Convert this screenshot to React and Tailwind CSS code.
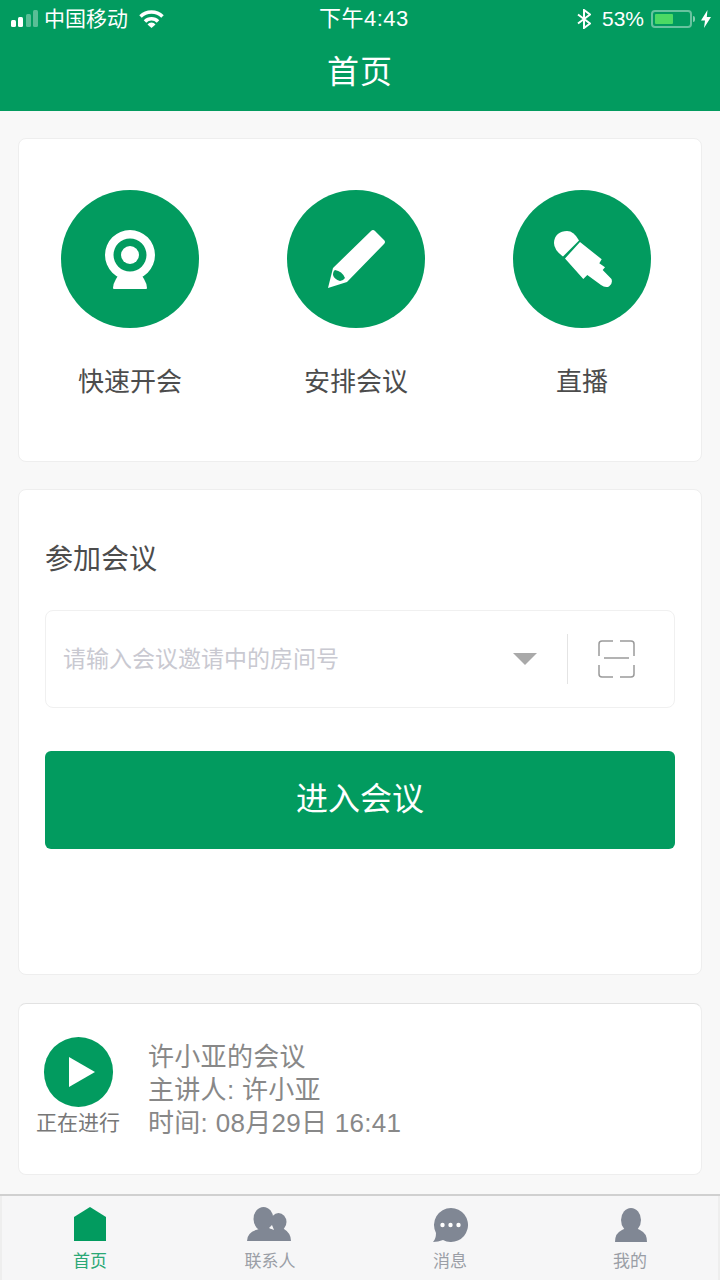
const font = { fontFamily: '"Liberation Sans", "Noto Sans CJK SC", sans-serif' };

function StatusBar() {
  return (
    <div className="relative flex h-[37px] items-center pl-[11px] pr-[9px] text-[21px] leading-none text-white">
      <svg width="28" height="18" viewBox="0 0 28 18" fill="#fff">
        <rect x="0" y="10" width="5" height="7" rx="1.5" />
        <rect x="7" y="7" width="5" height="10" rx="1.5" />
        <rect x="15" y="4" width="5" height="13" rx="1.5" opacity="0.35" />
        <rect x="22" y="0" width="5" height="17" rx="1.5" opacity="0.35" />
      </svg>
      <span className="ml-[5px]">中国移动</span>
      <svg className="ml-[11px]" width="25" height="18" viewBox="0 0 25 18" fill="none" stroke="#fff" strokeWidth="3.500">
        <path d="M1.500 6.500a15.500 15.500 0 0 1 22 0" />
        <path d="M6 11.500a9 9 0 0 1 13 0" />
        <path d="M8.500 14.500l4 3.500 4-3.500a5 5 0 0 0-8 0z" fill="#fff" stroke="none" />
      </svg>
      <span className="absolute left-[319px] top-[8px] text-[22px] tracking-[0.5px]">下午4:43</span>
      <div className="ml-auto flex items-center">
        <svg width="14" height="20" viewBox="0 0 14 20" fill="none" stroke="#fff" strokeWidth="2">
          <path d="M1 5.500l12 9-6 4.500V1l6 4.500-12 9" />
        </svg>
        <span className="ml-[11px] text-[21px]">53%</span>
        <div className="ml-[7px] flex h-[18px] w-[41px] items-center rounded-[4px] border-2 border-white/40 p-[2px]">
          <div className="h-full w-[18px] rounded-[1px] bg-[#4cd964]" />
        </div>
        <div className="ml-[1px] h-[6px] w-[2px] rounded-r-sm bg-white/50" />
        <svg className="ml-[6px]" width="10" height="18" viewBox="0 0 10 18" fill="#fff">
          <path d="M6.500 0L0 10.500h4L3 18l7-11H5.800z" />
        </svg>
      </div>
    </div>
  );
}

function Action({ label, children }) {
  return (
    <div className="flex flex-col items-center">
      <div className="flex h-[138px] w-[138px] items-center justify-center rounded-full bg-[#029b5f]">{children}</div>
      <span className="mt-[38px] text-[26px] leading-[33px] text-[#4c4c4c]">{label}</span>
    </div>
  );
}

function TabItem({ label, active, children }) {
  return (
    <div className="flex flex-col items-center">
      <div className="flex h-[36px] items-end">{children}</div>
      <span className={`mt-[10px] text-[17px] leading-[22px] ${active ? 'text-[#2aa876]' : 'text-[#9a9ea6]'}`}>{label}</span>
    </div>
  );
}

export default function App() {
  return (
    <div className="flex h-[1280px] w-[720px] flex-col overflow-hidden bg-[#f8f8f8]" style={font}>
      <header className="h-[111px] bg-[#029b5f]">
        <StatusBar />
        <h1 className="mt-[15px] text-center text-[32px] font-normal leading-[40px] tracking-[1px] text-white">首页</h1>
      </header>

      <main className="flex flex-col px-[18px] pt-[27px]">
        <section className="flex h-[324px] gap-[88px] rounded-[8px] border border-[#eeeeee] bg-white pl-[42px] pt-[51px]">
          <Action label="快速开会">
            <svg className="translate-y-[1px]" width="52" height="60" viewBox="0 0 52 60" fill="#fff">
              <path fillRule="evenodd" d="M26 0a25 25 0 1 1 0 50 25 25 0 0 1 0-50zm0 8.500a16.500 16.500 0 1 0 0 33 16.500 16.500 0 0 0 0-33z" />
              <circle cx="26" cy="25" r="9" />
              <path d="M15 44h22l3 5q3 5 3 9 0 1-1 1H10q-1 0-1-1 0-4 3-9z" />
            </svg>
          </Action>
          <Action label="安排会议">
            <svg width="60" height="60" viewBox="0 0 60 60" fill="#fff">
              <path d="M2 59L7 39 45 2q2-2 4 0l9 9q2 2 0 4L21 53z" />
              <path d="M9 41Q16 42 19 49 17 52 14 52 8 50 7 46 7 42 9 41z" fill="#029b5f" />
            </svg>
          </Action>
          <Action label="直播">
            <svg width="66" height="66" viewBox="0 0 66 66" fill="#fff">
              <path d="M14 30.500Q5 24 5 17C5 9 11 5 18 5Q25 5 30 14.500z" />
              <path d="M16 32.500L31 16l21.700 17.300-2.400 4 5.700 4-2.300 2.700 8.800 9Q64 58 60 60.500 56 62 52 59L38.300 49l-4 4z" />
            </svg>
          </Action>
        </section>

        <section className="mt-[27px] h-[486px] rounded-[8px] border border-[#eeeeee] bg-white px-[26px] pt-[52px]">
          <h2 className="text-[28px] font-normal leading-[36px] text-[#4c4c4c]">参加会议</h2>
          <div className="mt-[32px] flex h-[98px] items-center rounded-[8px] border border-[#f0f0f0] pl-[17px]">
            <span className="flex-1 text-[23px] text-[#c9c9d1]">请输入会议邀请中的房间号</span>
            <svg className="-translate-x-[1px]" width="24" height="12" viewBox="0 0 24 12" fill="#a9a9a9">
              <path d="M0 0h24L12 12z" />
            </svg>
            <div className="ml-[29px] h-[50px] w-[1px] bg-[#e4e4e4]" />
            <svg className="ml-[30px] mr-[39px]" width="37" height="38" viewBox="0 0 37 38" fill="none" stroke="#9a9a9a" strokeWidth="1.500">
              <path d="M1 16V4q0-3 3-3h11M22 1h11q3 0 3 3v12M6 18h25M1 25v9q0 3 3 3h11M22 37h11q3 0 3-3v-9" />
            </svg>
          </div>
          <button className="mt-[43px] h-[98px] w-full rounded-[6px] bg-[#029b5f] pb-[2px] text-[32px] text-white">进入会议</button>
        </section>

        <section className="mt-[28px] flex h-[172px] rounded-[8px] border border-[#eeeeee] border-t-[#e2e2e2] bg-white pl-[17px] pt-[33px]">
          <div className="flex flex-col items-center">
            <div className="flex h-[70px] w-[69px] items-center justify-center rounded-full bg-[#029b5f]">
              <svg className="ml-[8px]" width="26" height="30" viewBox="0 0 26 30" fill="#fff">
                <path d="M0 0l26 15L0 30z" />
              </svg>
            </div>
            <span className="mt-[2px] w-[84px] text-center text-[21px] leading-[28px] text-[#777]">正在进行</span>
          </div>
          <div className="ml-[28px] mt-[4px] text-[26px] leading-[33px] tracking-[0.3px] text-[#888]">
            <p>许小亚的会议</p>
            <p>主讲人: 许小亚</p>
            <p>时间: 08月29日 16:41</p>
          </div>
        </section>
      </main>

      <nav className="mt-auto grid h-[86px] grid-cols-4 border-t-2 border-t-[#d0d0d0] bg-[#f6f6f7] pt-[9px] shadow-[inset_2px_0_#eeeeee,inset_-2px_0_#eeeeee]">
        <TabItem label="首页" active>
          <svg width="32" height="34" viewBox="0 0 32 34" fill="#029b5f">
            <path d="M0 10L16 0l16 10v24H0z" />
          </svg>
        </TabItem>
        <TabItem label="联系人">
          <svg className="-translate-x-[1px]" width="44" height="34" viewBox="0 0 44 34" fill="#808794">
            <ellipse cx="16.500" cy="12" rx="10" ry="12" />
            <ellipse cx="31.500" cy="15" rx="8" ry="9" />
            <path d="M0 34q0-8 9-11l9-3 8 2h11q7 4 7 12z" />
            <path d="M22 21l3-3 2 5z" fill="#f6f6f7" />
          </svg>
        </TabItem>
        <TabItem label="消息">
          <svg width="35" height="34" viewBox="0 0 35 34" fill="#808794" className="translate-y-[1px]">
            <path d="M18 0a17 17 0 1 1-8 32Q5 34 0 34q3-3 3-9A17 17 0 0 1 18 0z" />
            <circle cx="9.500" cy="17" r="2.200" fill="#fff" />
            <circle cx="17.500" cy="17" r="2.200" fill="#fff" />
            <circle cx="25.500" cy="17" r="2.200" fill="#fff" />
          </svg>
        </TabItem>
        <TabItem label="我的">
          <svg width="32" height="34" viewBox="0 0 32 34" fill="#808794" className="translate-x-[1px] translate-y-[1px]">
            <ellipse cx="16" cy="12" rx="10" ry="12" />
            <path d="M0 34q0-9 7-12l4-2h10l4 2q7 3 7 12z" />
          </svg>
        </TabItem>
      </nav>
    </div>
  );
}
